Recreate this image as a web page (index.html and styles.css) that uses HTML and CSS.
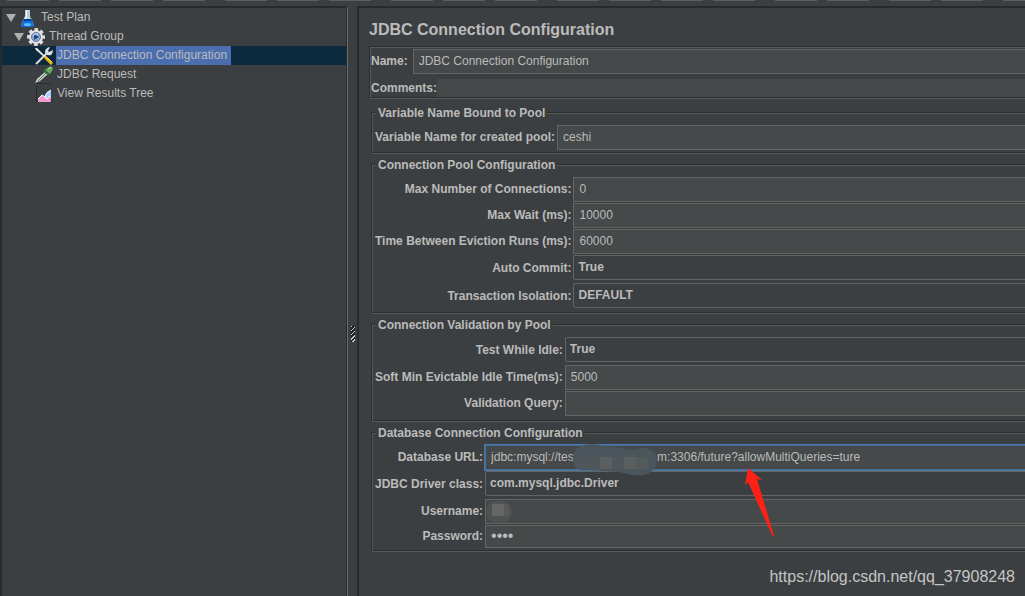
FILE: index.html
```html
<!DOCTYPE html>
<html lang="en">
<head>
<meta charset="utf-8">
<title>JDBC Connection Configuration</title>
<link rel="stylesheet" href="styles.css">
</head>
<body>
<div class="app">
  <div class="toolbar">
    <i></i><i></i><i></i><i></i><i class="group-start"></i><i></i><i></i><i class="group-start"></i><i></i><i></i><i class="group-start"></i><i></i><i></i><i></i><i class="group-start"></i><i></i><i class="group-start"></i><i></i><i class="group-start"></i>
  </div>
  <div class="workspace">
    <nav class="tree" aria-label="Test plan tree">
      <a class="node" href="#plan">
        <span class="arrow"></span>
        <svg class="icon" viewBox="0 0 18 18"><path d="M6 1h5v6l4 9q0 1-2 1H4q-2 0-2-1l4-9z" fill="#b9cddd"/><path d="M7 1h1v7l-3 5h-1l3-6z" fill="#fff"/><path d="M5 10h7l3 6q0 2-2 2H4q-2 0-2-2z" fill="#0f6fdc"/><path d="M5 10h7l1 2H4z" fill="#07428f"/><ellipse cx="8.500" cy="15.500" rx="3.500" ry="1.500" fill="#62bdff"/></svg>
        <span class="name">Test Plan</span>
      </a>
      <a class="node level-1" href="#group">
        <span class="arrow"></span>
        <svg class="icon" viewBox="0 0 18 18"><circle cx="9" cy="9" r="7.500" fill="none" stroke="#dedede" stroke-width="3" stroke-dasharray="3.500 2.390" stroke-dashoffset="1.750"/><circle cx="9" cy="9" r="7" fill="#e2e4e7"/><circle cx="9" cy="9" r="4.500" fill="#8da9cf" stroke="#5b7499"/><path d="M7 6l5 3-5 3z" fill="#1d4380"/><path d="M6 8q1-3 5-2" stroke="#e4efff" fill="none"/></svg>
        <span class="name">Thread Group</span>
      </a>
      <a class="node level-2 selected" href="#config" aria-current="page">
        <svg class="icon" viewBox="0 0 18 18"><path d="M1 17L12 6" stroke="#d9dada" stroke-width="2"/><path d="M11 2q2-2 4-2l-2 4 1 1 4-2q0 3-2 5-3 1-5-1-2-2 0-5z" fill="#dedfdf"/><path d="M0 1l2 0 8 8-1 1-8-7z" fill="#eee"/><path d="M10 10l7 7" stroke="#e8b412" stroke-width="3"/><path d="M10 9l7 6" stroke="#ffe25b"/></svg>
        <span class="name">JDBC Connection Configuration</span>
      </a>
      <a class="node level-2" href="#request">
        <svg class="icon" viewBox="0 0 18 18"><path d="M0 17l2-4 8-7 3 2-8 7z" fill="#c9d1c8"/><path d="M3 15l8-8" stroke="#667069"/><path d="M10 4l4-3q4-1 4 2l-3 5z" fill="#66ad5c"/><path d="M9 4l5 5" stroke="#2d7036" stroke-width="2"/><path d="M13 3l3-2" stroke="#b2dfa4"/><path d="M2 17.500h13" stroke="#292c2e"/></svg>
        <span class="name">JDBC Request</span>
      </a>
      <a class="node level-2" href="#results">
        <svg class="icon" viewBox="0 0 18 18"><path d="M1.500 1v15.500h16" stroke="#25282b" fill="none"/><path d="M9 13q1-6 7-8v9z" fill="#a9d0f8"/><path d="M10 12q1-5 6-7" stroke="#edf6ff" fill="none"/><path d="M3 17v-3l4-4 3 2 2 2 3-3 1 6z" fill="#f29bd3"/><path d="M3 14l4-4 3 2 2 2 3-3" stroke="#fff" fill="none"/></svg>
        <span class="name">View Results Tree</span>
      </a>
    </nav>
    <div class="divider"><span class="grip"></span></div>
    <main class="editor">
      <form class="form">
        <h1>JDBC Connection Configuration</h1>
        <div class="identity">
          <div class="name-row"><label for="name">Name:</label><input id="name" value="JDBC Connection Configuration"></div>
          <div class="comment-row"><label for="comments">Comments:</label><input id="comments"></div>
        </div>
        <fieldset>
          <legend>Variable Name Bound to Pool</legend>
          <div class="fields">
            <label for="pool">Variable Name for created pool:</label><input id="pool" value="ceshi">
          </div>
        </fieldset>
        <fieldset>
          <legend>Connection Pool Configuration</legend>
          <div class="fields">
            <label for="max">Max Number of Connections:</label><input id="max" value="0">
            <label for="wait">Max Wait (ms):</label><input id="wait" value="10000">
            <label for="eviction">Time Between Eviction Runs (ms):</label><input id="eviction" value="60000">
            <label for="commit">Auto Commit:</label><select id="commit"><option>True</option></select>
            <label for="isolation">Transaction Isolation:</label><select id="isolation"><option>DEFAULT</option></select>
          </div>
        </fieldset>
        <fieldset class="roomy">
          <legend>Connection Validation by Pool</legend>
          <div class="fields">
            <label for="idle">Test While Idle:</label><select id="idle"><option>True</option></select>
            <label for="soft">Soft Min Evictable Idle Time(ms):</label><input id="soft" value="5000">
            <label for="query">Validation Query:</label><input id="query">
          </div>
        </fieldset>
        <fieldset>
          <legend>Database Connection Configuration</legend>
          <div class="fields">
            <label for="url">Database URL:</label>
            <div class="cell">
              <input id="url" class="focused" value="jdbc:mysql://tes                         m:3306/future?allowMultiQueries=ture">
              <svg class="url-mask" viewBox="0 0 86 32"><path d="M12 1q11-2 20 1l31 4q12-5 20 3 5 11-3 18-7 6-19 4l-14-3-29-2Q3 28 1 18-1 5 12 1z" fill="#4b555c"/><path d="M2 13h26v12H5zM40 13h12v12H40z" fill="#50575b"/><path d="M28 13h12v12H28zM52 13h12v12H52z" fill="#5a605f"/><path d="M64 13h12v12H64z" fill="#535a5c"/></svg>
              <svg class="pointer" viewBox="0 0 30 70"><path d="M3 0l14 12-5-1 17 57-1 1L3 14 0 17z" fill="#ff2115"/></svg>
            </div>
            <label for="driver">JDBC Driver class:</label><select id="driver"><option>com.mysql.jdbc.Driver</option></select>
            <label for="user">Username:</label>
            <div class="cell">
              <input id="user">
              <svg class="user-mask" viewBox="0 0 26 22"><ellipse cx="13" cy="11" rx="13" ry="11" fill="#4f5252"/><path d="M6 3h12v12H6z" fill="#656566"/><path d="M18 3h5v12h-5z" fill="#585a5b"/></svg>
            </div>
            <label for="password">Password:</label><input id="password" class="compact" type="password" value="test">
          </div>
        </fieldset>
      </form>
    </main>
  </div>
  <div class="watermark">https://blog.csdn.net/qq_37908248</div>
</div>
</body>
</html>
```
FILE: styles.css
```css
* { box-sizing: border-box; }

body {
  margin: 0;
  background: #3c3f41;
  color: #bbb;
  font: 12px/14px "Liberation Sans", Arial, sans-serif;
}

.app {
  position: relative;
  display: flex;
  flex-direction: column;
  min-height: 100vh;
  overflow: hidden;
}

.toolbar {
  display: flex;
  gap: 10px;
  height: 6px;
  padding-left: 7px;
  overflow: hidden;
}

.toolbar i { flex: none; width: 42px; height: 1px; background: #5a5f5c; }
.toolbar .group-start { margin-left: 10px; }

.workspace { display: flex; flex: 1; }

.tree {
  flex: 0 0 348px;
  border: 2px solid #282b2d;
  border-right: 1px solid #6a6d6e;
  border-bottom: 0;
  box-shadow: inset -1px 0 #282b2d;
}

.node {
  display: flex;
  align-items: center;
  height: 19px;
  margin-right: 1px;
  padding-left: 4px;
  color: inherit;
  text-decoration: none;
}

.level-1 { padding-left: 12px; }
.level-2 { padding-left: 33px; }
.selected { background: #0d293e; }
.selected .name { background: #4b6eaf; }

.arrow {
  width: 9px;
  border: solid transparent;
  border-width: 8px 5px 0;
  border-top-color: #b0b0b0;
}

.icon { flex: none; width: 18px; height: 18px; }
.arrow + .icon { margin-left: 3px; }
.name { margin-left: 3px; padding: 0 4px 0 1px; line-height: 19px; }

.divider {
  display: flex;
  flex: 0 0 9px;
  align-items: center;
  justify-content: center;
}

.grip {
  width: 4px;
  height: 16px;
  margin-top: 66px;
  background: repeating-linear-gradient(135deg, #ccc 0 1px, #222 1px 3px);
}

.editor {
  flex: 1;
  min-width: 0;
  padding: 12px 0 0 10px;
  overflow: hidden;
  border: solid #282b2d;
  border-width: 2px 0 0 2px;
}

.form { margin-right: -8px; }
h1 { margin: 0 0 6px; font-size: 16px; line-height: 20px; }

.identity,
fieldset { border: 2px groove rgba(111, 114, 115, 0.53); }

.identity > div { display: flex; align-items: center; }
.name-row { gap: 5px; margin: 1px 0 5px; }
label, legend { font-weight: bold; }
.comment-row input { height: 18px; border: 0; }

fieldset {
  min-width: 0;
  margin: 4px 0 0 2px;
  padding: 5px 0 2px 2px;
}

.identity + fieldset { margin-top: 7px; }
.roomy { padding-bottom: 4px; }
legend { margin-left: 1px; padding: 0 2px; }

.fields {
  display: grid;
  grid-template-columns: auto 1fr;
  gap: 1px 2px;
  align-items: center;
  text-align: right;
}

.name-row label,
.fields label { padding-bottom: 2px; }

input, select {
  display: block;
  width: 100%;
  min-width: 0;
  height: 25px;
  margin: 0;
  padding: 0 5px 2px;
  border: 1px solid #646464;
  border-radius: 0;
  outline: 0;
  background: #45494a;
  color: #bbb;
  font: inherit;
}

select {
  appearance: none;
  margin-bottom: 2px;
  padding: 0 4px 2px;
  border-radius: 2px;
  background: #3c3f41;
  font-weight: bold;
}

.focused { border-color: #466d94; box-shadow: 0 0 0 1px #4a78aa; }
.compact { height: 23px; font-size: 16px; }
.cell { position: relative; }

.url-mask { position: absolute; top: -1px; left: 87px; width: 86px; height: 32px; z-index: 1; }
.pointer { position: absolute; top: 23px; left: 260px; width: 30px; height: 70px; z-index: 1; }
.user-mask { position: absolute; top: 2px; left: 1px; width: 26px; height: 22px; }

.watermark {
  position: absolute;
  right: 10px;
  bottom: 10px;
  color: #c4c5c5;
  font-size: 16px;
  line-height: 18px;
}
```
